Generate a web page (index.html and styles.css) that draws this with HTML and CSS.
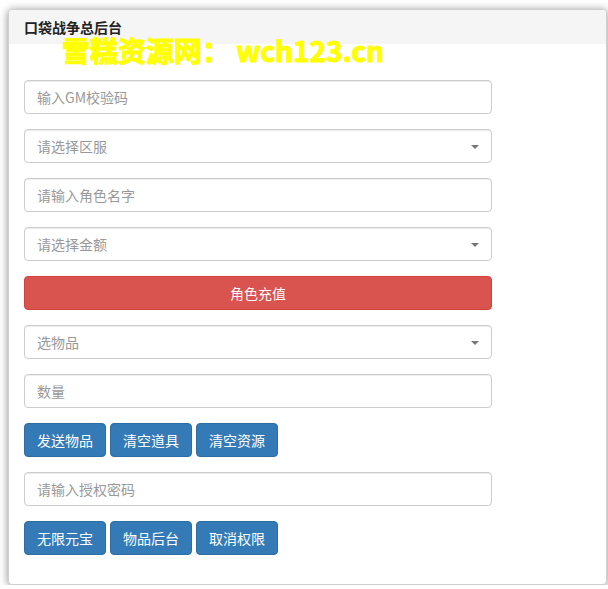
FILE: index.html
```html
<!DOCTYPE html>
<html lang="zh-CN">
<head>
<meta charset="utf-8">
<title>口袋战争总后台</title>
<link rel="stylesheet" href="styles.css">
</head>
<body>
<div class="panel">
  <div class="panel-heading">口袋战争总后台</div>
  <div class="watermark">雪糕资源网： wch123.cn</div>
  <div class="panel-body">
    <form class="form">
      <input class="field" type="text" placeholder="输入GM校验码">
      <div class="field select"><span class="ph">请选择区服</span><span class="caret"></span></div>
      <input class="field" type="text" placeholder="请输入角色名字">
      <div class="field select"><span class="ph">请选择金额</span><span class="caret"></span></div>
      <button type="button" class="btn btn-danger btn-block">角色充值</button>
      <div class="field select"><span class="ph">选物品</span><span class="caret"></span></div>
      <input class="field" type="text" placeholder="数量">
      <div class="btn-row">
        <button type="button" class="btn btn-primary">发送物品</button>
        <button type="button" class="btn btn-primary">清空道具</button>
        <button type="button" class="btn btn-primary">清空资源</button>
      </div>
      <input class="field" type="text" placeholder="请输入授权密码">
      <div class="btn-row">
        <button type="button" class="btn btn-primary">无限元宝</button>
        <button type="button" class="btn btn-primary">物品后台</button>
        <button type="button" class="btn btn-primary">取消权限</button>
      </div>
    </form>
  </div>
</div>
</body>
</html>
```
FILE: styles.css
```css
* { box-sizing: border-box; }
html, body { margin: 0; padding: 0; background: #fff; }
body {
  font-family: "Noto Sans CJK SC", "Noto Sans", "Liberation Sans", sans-serif;
  font-size: 14px;
  color: #333;
  padding: 9px 0 0 8px;
}
.panel {
  position: relative;
  width: 599px;
  height: 576px;
  background: #fff;
  border: 1px solid #cfcfcf;
  border-radius: 4px;
  box-shadow: 0 1px 8px rgba(0, 0, 0, 0.45);
}
.panel-heading {
  height: 34px;
  padding: 0 15px;
  background: #f5f5f5;
  border-top-left-radius: 3px;
  border-top-right-radius: 3px;
  font-size: 14px;
  font-weight: 700;
  line-height: 34px;
  color: #222;
}
.watermark {
  position: absolute;
  left: 53px;
  top: 22px;
  font-family: "Noto Sans CJK SC", "Liberation Sans", sans-serif;
  font-size: 28px;
  font-weight: 700;
  line-height: 36px;
  color: #ffff00;
  -webkit-text-stroke: 1px #ffff00;
  white-space: nowrap;
}
.panel-body {
  padding: 36px 15px 0 15px;
}
.form {
  width: 468px;
  display: flex;
  flex-direction: column;
  gap: 15px;
}
.field {
  display: flex;
  align-items: center;
  width: 468px;
  height: 34px;
  padding: 0 12px;
  margin: 0;
  border: 1px solid #ccc;
  border-radius: 4px;
  background: #fff;
  box-shadow: inset 0 1px 1px rgba(0, 0, 0, 0.075);
  font-family: inherit;
  font-size: 14px;
  color: #555;
  outline: none;
}
.field::placeholder { color: #999; }
.select { position: relative; }
.ph { color: #999; }
.caret {
  position: absolute;
  right: 12px;
  top: 15px;
  width: 0;
  height: 0;
  border-left: 4px solid transparent;
  border-right: 4px solid transparent;
  border-top: 4px solid #777;
}
.btn {
  display: inline-block;
  height: 34px;
  padding: 0 12px;
  margin: 0;
  border: 1px solid transparent;
  border-radius: 4px;
  font-family: inherit;
  font-size: 14px;
  line-height: 32px;
  color: #fff;
  cursor: pointer;
}
.btn-danger { background: #d9534f; border-color: #d43f3a; }
.btn-primary { background: #337ab7; border-color: #2e6da4; }
.btn-block { width: 468px; }
.btn-row {
  display: flex;
  gap: 4px;
}
```
